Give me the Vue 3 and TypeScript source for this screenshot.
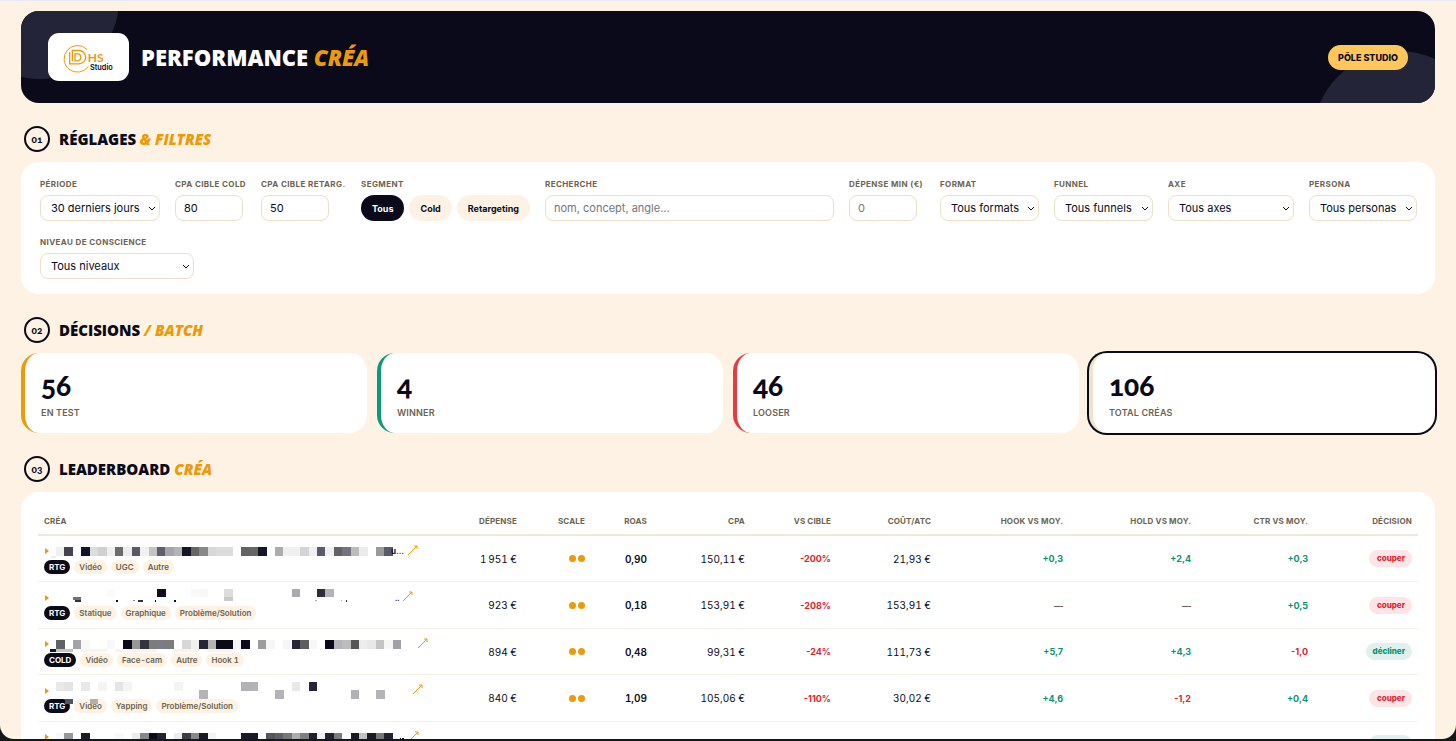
<script setup lang="ts">
import { ref } from 'vue'

type Cell = [x: number, y: number, w: number, h: number, fill: string]

interface Creative {
  kind: string
  tags: string[]
  cells: Cell[]
  nameWidth: number
  tail: string
  spend: string
  roas: string
  cpa: string
  target: string
  atc: string
  hook: string
  hold: string
  ctr: string
  decision: string
}

const STEP = 25.25

/* Builds one strip of mosaic cells from "index:colour" pairs. */
function strip(y: number, spec: string): Cell[] {
  return spec.split(' ').map((pair) => {
    const [index, tone] = pair.split(':')
    const fill = tone.length === 2 ? `#${tone}${tone}${tone}` : `#${tone}`
    return [Number(index) * STEP, y, 26, 26, fill] as Cell
  })
}

const segments = ['Tous', 'Cold', 'Retargeting']
const segment = ref('Tous')
const cpaCold = ref('80')
const cpaRetarget = ref('50')
const search = ref('')
const minSpend = ref('')

const periodField = { id: 'periode', label: 'Période', value: '30 derniers jours', size: 'w-period' }
const selectFields = [
  { id: 'format', label: 'Format', value: 'Tous formats', size: 'w-format' },
  { id: 'funnel', label: 'Funnel', value: 'Tous funnels', size: 'w-format' },
  { id: 'axe', label: 'Axe', value: 'Tous axes', size: 'w-axis' },
  { id: 'persona', label: 'Persona', value: 'Tous personas', size: 'w-persona' },
  { id: 'niveau', label: 'Niveau de conscience', value: 'Tous niveaux', size: 'w-level' },
]

const stats = [
  { value: '56', label: 'En test', tone: 'amber' },
  { value: '4', label: 'Winner', tone: 'green' },
  { value: '46', label: 'Looser', tone: 'red' },
  { value: '106', label: 'Total créas', tone: 'total' },
]

const columns = ['Créa', 'Dépense', 'Scale', 'ROAS', 'CPA', 'vs cible', 'Coût/ATC', 'Hook vs moy.', 'Hold vs moy.', 'CTR vs moy.', 'Décision']

const creatives: Creative[] = [
  {
    kind: 'RTG', tags: ['Vidéo', 'UGC', 'Autre'], nameWidth: 335, tail: 'u…',
    cells: [
      ...strip(9, '0:f0 1:45434f 3:141428 4:dc 5:d0 6:f0 7:6c 8:ec 9:5a5965 10:f0 11:c4 12:5e5e6c 13:a4a4aa 14:b4 15:15152a 16:66 17:88 18:d8 19:dc 20:dc 22:62 23:66 24:15152a 26:ac 27:f0 28:f0 29:d4 30:f0 31:5a5a6c 32:f0 33:62 34:727280 35:bc 36:ec 38:9a 39:5a5a6a'),
      [-16, 36, 16, 5, '#eeeeee'],
    ],
    spend: '1\u202f951 €', roas: '0,90', cpa: '150,11 €', target: '-200%', atc: '21,93 €', hook: '+0,3', hold: '+2,4', ctr: '+0,3', decision: 'couper',
  },
  {
    kind: 'RTG', tags: ['Statique', 'Graphique', 'Problème/Solution'], nameWidth: 339, tail: '..',
    cells: [
      ...strip(-4, '6:fa 12:0e0e20 16:f9 17:f8 20:dc 28:acacb0 31:2c2c3c 32:b4b4b8'),
      [50, 22, 26, 8, '#70707a'], [58, 31, 16, 4, '#33333f'], [505, 22, 26, 10, '#c8c8c8'],
      [180, 31, 5, 4, '#0a0a1a'], [232, 30, 4, 3, '#88888f'], [247, 31, 14, 4, '#33333f'], [297, 31, 4, 4, '#0a0a1a'],
      [354, 31, 5, 5, '#0a0a1a'], [778, 30, 4, 3, '#aaaaaa'], [855, 29, 4, 3, '#aaaaaa'], [869, 31, 5, 5, '#33333f'],
    ],
    spend: '923 €', roas: '0,18', cpa: '153,91 €', target: '-208%', atc: '153,91 €', hook: '—', hold: '—', ctr: '+0,5', decision: 'couper',
  },
  {
    kind: 'COLD', tags: ['Vidéo', 'Face-cam', 'Autre', 'Hook 1'], nameWidth: 358, tail: '',
    cells: [
      ...strip(9, '0:626266 2:a4a4aa 3:f8 6:f8 8:0a0a1a 9:989898 10:333340 11:7c 12:7c7c88 13:7c 15:d8 16:f0 17:262636 18:b4 19:0a0a1a 20:0a0a1a 21:f4 22:0a0a1a 24:9c 25:f6 27:f6 28:262636 29:5e 30:f8 32:0a0a1a 33:b4b4b8 34:bc 35:55 36:ec 37:e8 38:c4 39:f6 40:a0a0a6'),
      [-18, 35, 18, 10, '#15152a'], [0, 35, 50, 10, '#c4c4c8'], [76, 35, 76, 10, '#fdf2e3'], [177, 35, 126, 10, '#fdf2e3'],
      [353, 35, 76, 10, '#fdf2e3'], [454, 35, 76, 10, '#fdf2e3'],
    ],
    spend: '894 €', roas: '0,48', cpa: '99,31 €', target: '-24%', atc: '111,73 €', hook: '+5,7', hold: '+4,3', ctr: '-1,0', decision: 'décliner',
  },
  {
    kind: 'RTG', tags: ['Vidéo', 'Yapping', 'Problème/Solution'], nameWidth: 353, tail: '',
    cells: [
      ...strip(-3, '0:e8 1:e4 3:e8 5:f4 7:e4 8:f4 14:f4 22:b2b2b6 23:b4b4b8 28:e8 30:26263a'),
      ...strip(22, '17:b4b4b8 26:b4b4b8 35:b2b2b6 38:b4b4b8'),
      [26, 48, 26, 15, '#55555f'], [101, 48, 26, 14, '#b8aea6'],
    ],
    spend: '840 €', roas: '1,09', cpa: '105,06 €', target: '-110%', atc: '30,02 €', hook: '+4,6', hold: '-1,2', ctr: '+0,4', decision: 'couper',
  },
  {
    kind: '', tags: [], nameWidth: 349, tail: '',
    cells: [
      ...strip(9, '0:f8 1:98989c 3:1a1a2a 7:f8 9:ec 10:888888 11:0a0a1a 12:222232 14:ec 15:3c3c48 16:888888 17:1a1a2a 18:f4 22:1a1a2a 23:1a1a2a 25:555560 26:60606a 27:77 28:ac 29:80 30:202030 31:f0 32:222232 33:7c 35:1a1a2a 36:c0 37:1a1a2a 38:77 39:222232'),
      [1032, 25, 4, 4, '#0a0a1a'], [1039, 25, 4, 4, '#0a0a1a'],
    ],
    spend: '', roas: '', cpa: '', target: '', atc: '', hook: '', hold: '', ctr: '', decision: '',
  },
]

function trend(value: string): string {
  if (value.startsWith('+')) return 'up'
  return value.startsWith('-') ? 'down' : 'none'
}
</script>

<template>
  <div class="window">
    <header class="hero">
      <span class="orb orb-left"></span>
      <span class="orb orb-right"></span>
      <div class="logo">
        <svg width="54" height="31" viewBox="185 125 162 92" role="img" aria-label="DHS Studio">
          <g fill="none" stroke="#eb9a0a">
            <path d="M260 147A40 40 0 1 0 264 198" stroke-width="3" />
            <path d="M208 155V190H236A20 20 0 0 0 236 150H216V182" stroke-width="4" />
            <path d="M224 160H234A11 11 0 0 1 234 181H224Z" stroke-width="4" />
          </g>
          <text x="262" y="184" class="logo-hs">HS</text>
          <text x="269" y="207" class="logo-studio">Studio</text>
        </svg>
      </div>
      <h1>PERFORMANCE <em>CRÉA</em></h1>
      <span class="pole">PÔLE STUDIO</span>
    </header>

    <main>
      <section>
        <div class="heading"><span class="num">01</span><h2>RÉGLAGES <em>&amp; FILTRES</em></h2></div>
        <form class="panel filters" @submit.prevent>
          <div class="field" :class="periodField.size">
            <label :for="periodField.id">{{ periodField.label }}</label>
            <div class="select">
              <select :id="periodField.id"><option>{{ periodField.value }}</option></select>
              <svg width="8" height="5" viewBox="0 0 8 5"><path d="M1 1L4 4L7 1" /></svg>
            </div>
          </div>
          <div class="field w-cold">
            <label for="cold">CPA cible Cold</label>
            <input id="cold" v-model="cpaCold" class="short" type="text" />
          </div>
          <div class="field w-retarget">
            <label for="retarg">CPA cible Retarg.</label>
            <input id="retarg" v-model="cpaRetarget" class="short" type="text" />
          </div>
          <div class="field" role="group" aria-labelledby="segment-label">
            <span id="segment-label" class="label">Segment</span>
            <div class="segments">
              <button v-for="s in segments" :key="s" type="button" :class="{ active: s === segment }" @click="segment = s">{{ s }}</button>
            </div>
          </div>
          <div class="field grow">
            <label for="search">Recherche</label>
            <input id="search" v-model="search" type="text" placeholder="nom, concept, angle…" />
          </div>
          <div class="field w-min">
            <label for="min">Dépense min (€)</label>
            <input id="min" v-model="minSpend" class="short" type="text" placeholder="0" />
          </div>
          <div v-for="f in selectFields" :key="f.id" class="field" :class="f.size">
            <label :for="f.id">{{ f.label }}</label>
            <div class="select">
              <select :id="f.id"><option>{{ f.value }}</option></select>
              <svg width="8" height="5" viewBox="0 0 8 5"><path d="M1 1L4 4L7 1" /></svg>
            </div>
          </div>
        </form>
      </section>

      <section>
        <div class="heading"><span class="num">02</span><h2>DÉCISIONS <em>/ BATCH</em></h2></div>
        <div class="stats">
          <button v-for="s in stats" :key="s.label" type="button" class="stat" :class="s.tone">
            <strong>{{ s.value }}</strong>
            <span>{{ s.label }}</span>
          </button>
        </div>
      </section>

      <section>
        <div class="heading"><span class="num">03</span><h2>LEADERBOARD <em>CRÉA</em></h2></div>
        <div class="panel board">
          <table>
            <colgroup>
              <col v-for="(c, i) in columns" :key="c" :class="'col-' + i" />
            </colgroup>
            <thead>
              <tr><th v-for="c in columns" :key="c" scope="col">{{ c }}</th></tr>
            </thead>
            <tbody>
              <tr v-for="(r, i) in creatives" :key="i">
                <td>
                  <div class="name">
                    <svg class="caret" width="4" height="6" viewBox="0 0 4 6"><path d="M0 0L4 3L0 6Z" /></svg>
                    <svg class="mosaic" :width="r.nameWidth" height="15" :viewBox="`0 0 ${r.nameWidth * 3} 45`" shape-rendering="crispEdges">
                      <rect v-for="(c, k) in r.cells" :key="k" :x="c[0]" :y="c[1]" :width="c[2]" :height="c[3]" :fill="c[4]" />
                    </svg>
                    <span v-if="r.tail" class="tail">{{ r.tail }}</span>
                    <a href="#" aria-label="Ouvrir la créa">
                      <svg width="10" height="10" viewBox="0 0 10 10"><path d="M0 10L9 1M6 1H9V4" /></svg>
                    </a>
                  </div>
                  <div class="tags">
                    <span v-if="r.kind" class="tag kind">{{ r.kind }}</span>
                    <span v-for="t in r.tags" :key="t" class="tag">{{ t }}</span>
                  </div>
                </td>
                <td>{{ r.spend }}</td>
                <td><span v-if="r.spend" class="dots"><i></i><i></i></span></td>
                <td class="roas">{{ r.roas }}</td>
                <td>{{ r.cpa }}</td>
                <td class="delta down">{{ r.target }}</td>
                <td>{{ r.atc }}</td>
                <td class="delta" :class="trend(r.hook)">{{ r.hook }}</td>
                <td class="delta" :class="trend(r.hold)">{{ r.hold }}</td>
                <td class="delta" :class="trend(r.ctr)">{{ r.ctr }}</td>
                <td><span class="decision" :class="{ good: r.decision !== 'couper' }">{{ r.decision }}</span></td>
              </tr>
            </tbody>
          </table>
        </div>
      </section>
    </main>
  </div>
</template>

<style>
html,
body {
  background: #15171c;
  overflow: hidden;
}
</style>

<style scoped>
* {
  box-sizing: border-box;
}
.window {
  height: calc(100vh - 2px);
  overflow: hidden;
  padding: 10px 21px 0;
  border-top: 1px solid #e6e8f4;
  border-radius: 0 0 14px 14px;
  background: #fdf2e3;
  color: #0a0a1a;
  font-family: Inter, "Liberation Sans", sans-serif;
}
h1,
h2 {
  margin: 0;
  font-family: "Open Sans", "Liberation Sans", sans-serif;
  font-weight: 800;
}
em {
  color: #eb9a0a;
}
.hero {
  position: relative;
  display: flex;
  align-items: center;
  height: 92px;
  padding: 0 27px;
  gap: 12px;
  border-radius: 18px;
  overflow: hidden;
  background: #0a0a1a;
}
.orb {
  position: absolute;
  border-radius: 50%;
  background: #242439;
}
.orb-left {
  left: -60px;
  top: -90px;
  width: 158px;
  height: 158px;
}
.orb-right {
  right: -50px;
  top: 40px;
  width: 172px;
  height: 172px;
}
.logo {
  position: relative;
  display: flex;
  align-items: center;
  justify-content: center;
  width: 81px;
  height: 48px;
  border-radius: 11px;
  background: #fff;
}
.logo-hs {
  fill: #eb9a0a;
  font: 700 36px Lato, sans-serif;
}
.logo-studio {
  fill: #0a0a1a;
  font: 600 22px Inter, sans-serif;
}
h1 {
  position: relative;
  color: #fff;
  font-size: 22px;
  line-height: 30px;
}
.pole {
  position: relative;
  margin-left: auto;
  padding: 0 10px;
  border-radius: 13px;
  background: #ffc65a;
  font-size: 9px;
  font-weight: 800;
  line-height: 25px;
}
section {
  margin-top: 23px;
}
.heading {
  display: flex;
  align-items: center;
  gap: 9px;
  padding-left: 3px;
  margin-bottom: 10px;
}
.num {
  width: 26px;
  border: 2px solid #0a0a1a;
  border-radius: 50%;
  font: 900 10px/22px Lato, sans-serif;
  font-variant-numeric: oldstyle-nums;
  text-align: center;
}
h2 {
  font-size: 15px;
  line-height: 26px;
}
.panel {
  border-radius: 18px;
  background: #fff;
}
.filters {
  display: flex;
  flex-wrap: wrap;
  gap: 15px;
  padding: 16px 18px 15px 19px;
}
.field {
  display: flex;
  flex-direction: column;
  gap: 5px;
}
.field label,
.label {
  color: #6b6350;
  font-size: 8px;
  font-weight: 700;
  line-height: 12px;
  letter-spacing: 0.05em;
  text-transform: uppercase;
  white-space: nowrap;
}
.w-period { width: 120px; }
.w-cold { width: 71px; }
.w-retarget { width: 85px; }
.w-min { width: 76px; }
.w-format { width: 99px; }
.w-axis { width: 126px; }
.w-persona { width: 108px; }
.w-level { width: 154px; }
.grow {
  flex: 1;
  min-width: 180px;
}
input,
select {
  width: 100%;
  height: 26px;
  border: 1px solid #eedfc8;
  border-radius: 8px;
  background: #fff;
  color: #0a0a1a;
  font: 11px Inter, sans-serif;
  outline: none;
}
input {
  padding: 0 8px;
}
input::placeholder {
  color: #75757c;
}
input.short {
  width: 68px;
}
.select {
  position: relative;
}
select {
  display: block;
  appearance: none;
  padding: 0 10px;
}
.select svg {
  position: absolute;
  right: 4px;
  top: 11px;
  pointer-events: none;
}
.select path {
  fill: none;
  stroke: #0a0a1a;
}
.segments {
  display: flex;
  gap: 5px;
}
.segments button {
  height: 26px;
  padding: 0 11px;
  border: 0;
  border-radius: 13px;
  background: #fdf2e3;
  color: #0a0a1a;
  font: 700 9px Inter, sans-serif;
}
.segments .active {
  background: #0a0a1a;
  color: #fff;
}
.stats {
  display: grid;
  grid-template-columns: repeat(4, 1fr);
  gap: 10px;
}
.stat {
  display: flex;
  flex-direction: column;
  height: 80px;
  padding: 16px 16px 0;
  border: 0 solid #eb9a0a;
  border-left-width: 4px;
  border-radius: 18px;
  background: #fff;
  color: #0a0a1a;
  font-family: inherit;
  text-align: left;
}
.stat strong {
  font: 900 28px/32px Lato, sans-serif;
  font-variant-numeric: oldstyle-nums;
}
.stat span {
  margin-top: 6px;
  color: #6b6350;
  font-size: 9px;
  font-weight: 600;
  line-height: 12px;
  letter-spacing: 0.02em;
  text-transform: uppercase;
}
.stat.green { border-color: #0a9a7a; }
.stat.red { border-color: #e63946; }
.stat.total {
  border-color: #f0e2cc;
  box-shadow: 0 0 0 2px #0a0a1a;
}
.board {
  padding: 14px 17px;
}
table {
  width: 100%;
  table-layout: fixed;
  border-collapse: separate;
  border-spacing: 0;
}
.col-1 { width: 60px; }
.col-2 { width: 68px; }
.col-3 { width: 62px; }
.col-4 { width: 98px; }
.col-5 { width: 86px; }
.col-6 { width: 100px; }
.col-7 { width: 132px; }
.col-8 { width: 128px; }
.col-9 { width: 117px; }
.col-10 { width: 104px; }
th {
  height: 30px;
  padding: 2px 6px 0;
  border-bottom: 2px solid #f1e8d8;
  color: #6b6350;
  font-size: 8px;
  font-weight: 700;
  letter-spacing: 0.02em;
  text-align: right;
  text-transform: uppercase;
  white-space: nowrap;
}
td {
  height: 46px;
  padding: 0 6px;
  border-bottom: 1px solid #f6f0e6;
  font-size: 10px;
  font-variant-numeric: tabular-nums;
  text-align: right;
  white-space: nowrap;
}
tbody tr:nth-child(even) td {
  height: 47px;
}
th:first-child,
td:first-child {
  text-align: left;
}
.name {
  position: relative;
  z-index: 1;
  display: flex;
  align-items: center;
  height: 15px;
}
.caret {
  margin: 0 7px 0 1px;
  fill: #eb9a0a;
}
.mosaic {
  flex: none;
  overflow: visible;
}
.tail {
  font-size: 8px;
  font-weight: 700;
}
.name a {
  display: flex;
  margin: 0 0 3px 4px;
}
.name a path {
  fill: none;
  stroke: #eb9a0a;
}
.tags {
  display: flex;
  gap: 4px;
  min-height: 14px;
  margin-top: 1px;
}
.tag {
  padding: 0 5px;
  border-radius: 7px;
  background: #fdf2e3;
  color: #6b6350;
  font-size: 8px;
  font-weight: 600;
  line-height: 14px;
}
.tag.kind {
  background: #0a0a1a;
  color: #fff;
  font-weight: 700;
}
.dots {
  display: flex;
  justify-content: flex-end;
  gap: 2px;
}
.dots i {
  width: 7px;
  height: 7px;
  border-radius: 50%;
  background: #eb9a0a;
}
.roas {
  font-weight: 600;
}
.delta {
  font-size: 9px;
  font-weight: 700;
  font-variant-numeric: normal;
}
.up { color: #0a9272; }
.down { color: #de2430; }
.none { color: #6b6350; }
.decision {
  display: inline-block;
  min-width: 43px;
  min-height: 17px;
  padding: 0 7px;
  border-radius: 9px;
  background: #fde4e6;
  color: #de2430;
  font-size: 8px;
  font-weight: 800;
  line-height: 17px;
}
.decision.good {
  background: #e0f0ec;
  color: #0a9272;
}
</style>
